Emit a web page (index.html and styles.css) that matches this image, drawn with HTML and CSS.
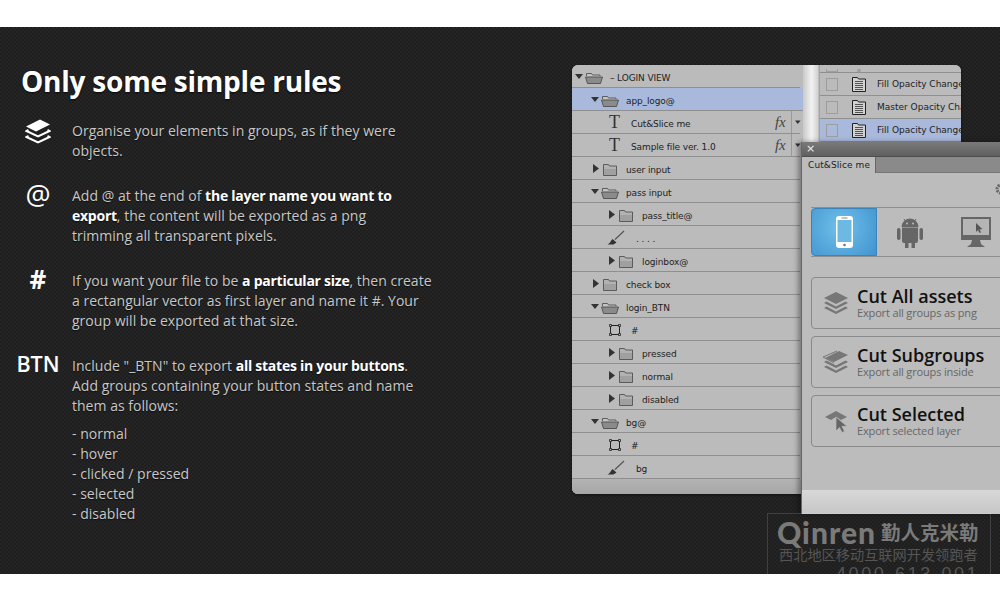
FILE: index.html
```html
<!DOCTYPE html>
<html lang="en">
<head>
<meta charset="utf-8">
<title>Only some simple rules</title>
<link rel="stylesheet" href="styles.css">
</head>
<body>
<svg class="defs" width="0" height="0" aria-hidden="true">
  <symbol id="arrow-down" viewBox="0 0 10 10"><path d="M0 2h8L4 7z"/></symbol>
  <symbol id="arrow-right" viewBox="0 0 10 10"><path d="M2 0v9l6-4.500z"/></symbol>
  <symbol id="folder-open" viewBox="0 0 18 12"><path d="M1.500 4V1.500h5l1 1.500h7.500v1" fill="#c4c4c4" stroke="#444" stroke-width=".8"/><path d="M.5 5h17l-2 6.500H2.500z" fill="#8b8b8b" stroke="#444" stroke-width=".8"/></symbol>
  <symbol id="folder-closed" viewBox="0 0 18 12"><path d="M2.500.5h5l1 1.500h7v9.500h-13z" fill="#b2b2b2" stroke="#444" stroke-width=".8"/><path d="M3 5h12v6H3z" fill="#a0a0a0"/></symbol>
  <symbol id="brush" viewBox="0 0 18 16"><path d="M17 1 8 9.500" stroke="#555" stroke-width="1.200" fill="none"/><path d="M5.500 9 9.500 12.500 6.500 14.500H0.500C3 13.500 3.500 11 5.500 9z" fill="#333"/></symbol>
  <symbol id="shape" viewBox="0 0 12 12"><path d="M1.500 1.500h9v9h-9z" fill="none" stroke="#222"/><path d="M.5.500h2v2h-2zM9.500.500h2v2h-2zM.5 9.500h2v2h-2zM9.500 9.500h2v2h-2z" fill="#bbb" stroke="#222" stroke-width=".8"/></symbol>
  <symbol id="doc" viewBox="0 0 14 15"><path d="M.5 14.500V.5h5l1 1.500h7v12.500z" fill="#d2d2d2" stroke="#222"/><path d="M3 4.500h8M3 6.500h8M3 8.500h8M3 10.500h8M3 12.500h8" stroke="#333" stroke-width=".8"/></symbol>
  <symbol id="stack" viewBox="0 0 26 24"><path d="M13 1 25 7 13 13 1 7z"/><path d="M3.500 10.500 1 12l12 6 12-6-2.500-1.500L13 15.500z"/><path d="M3.500 15.500 1 17l12 6 12-6-2.500-1.500L13 20.500z"/></symbol>
</svg>

<main class="stage">
  <section class="rules">
    <h1 class="title">Only some simple rules</h1>

    <div class="rule">
      <div class="mark">
        <svg class="mark-icon" viewBox="0 0 26 26"><path fill="#fff" d="M15 .5 25 5.500 11 12.500 1 7.500z"/><path fill="none" stroke="#fff" stroke-width="2" d="M3.500 11 1.500 12 13 17.500 24.500 12 22.500 11"/><path fill="none" stroke="#fff" stroke-width="2" d="M3.500 17 1.500 18 13 23.500 24.500 18 22.500 17"/></svg>
      </div>
      <div class="copy"><p>Organise your elements in groups, as if they were objects.</p></div>
    </div>

    <div class="rule">
      <div class="mark mark-text">@</div>
      <div class="copy"><p>Add @ at the end of <b>the layer name you want to export</b>, the content will be exported as a png<br>trimming all transparent pixels.</p></div>
    </div>

    <div class="rule">
      <div class="mark mark-text mark-hash">#</div>
      <div class="copy"><p>If you want your file to be <b>a particular size</b>, then create a rectangular vector as first layer and name it #. Your group will be exported at that size.</p></div>
    </div>

    <div class="rule">
      <div class="mark mark-text mark-btn">BTN</div>
      <div class="copy">
        <p>Include "_BTN" to export <b>all states in your buttons</b>. Add groups containing your button states and name them as follows:</p>
        <ul class="states">
          <li>- normal</li>
          <li>- hover</li>
          <li>- clicked / pressed</li>
          <li>- selected</li>
          <li>- disabled</li>
        </ul>
      </div>
    </div>
  </section>

  <div class="layers-window">
    <div class="layers">
      <div class="row d0"><svg class="arrow arrow-d"><use href="#arrow-down"/></svg><svg class="folder"><use href="#folder-open"/></svg><span>– LOGIN VIEW</span></div>
      <div class="row d1 selected"><svg class="arrow arrow-d"><use href="#arrow-down"/></svg><svg class="folder"><use href="#folder-open"/></svg><span>app_logo@</span></div>
      <div class="row d2"><span class="glyph-t">T</span><span>Cut&amp;Slice me</span><i class="fx">fx</i><span class="fx-menu"><svg class="arrow arrow-fx"><use href="#arrow-down"/></svg></span></div>
      <div class="row d2"><span class="glyph-t">T</span><span>Sample file ver. 1.0</span><i class="fx">fx</i><span class="fx-menu"><svg class="arrow arrow-fx"><use href="#arrow-down"/></svg></span></div>
      <div class="row d1"><svg class="arrow"><use href="#arrow-right"/></svg><svg class="folder"><use href="#folder-closed"/></svg><span>user input</span></div>
      <div class="row d1"><svg class="arrow arrow-d"><use href="#arrow-down"/></svg><svg class="folder"><use href="#folder-open"/></svg><span>pass input</span></div>
      <div class="row d15"><svg class="arrow"><use href="#arrow-right"/></svg><svg class="folder"><use href="#folder-closed"/></svg><span>pass_title@</span></div>
      <div class="row d2"><svg class="brush"><use href="#brush"/></svg><span>. . . .</span></div>
      <div class="row d15"><svg class="arrow"><use href="#arrow-right"/></svg><svg class="folder"><use href="#folder-closed"/></svg><span>loginbox@</span></div>
      <div class="row d1"><svg class="arrow"><use href="#arrow-right"/></svg><svg class="folder"><use href="#folder-closed"/></svg><span>check box</span></div>
      <div class="row d1"><svg class="arrow arrow-d"><use href="#arrow-down"/></svg><svg class="folder"><use href="#folder-open"/></svg><span>login_BTN</span></div>
      <div class="row d2"><svg class="shape"><use href="#shape"/></svg><span>#</span></div>
      <div class="row d15"><svg class="arrow"><use href="#arrow-right"/></svg><svg class="folder"><use href="#folder-closed"/></svg><span>pressed</span></div>
      <div class="row d15"><svg class="arrow"><use href="#arrow-right"/></svg><svg class="folder"><use href="#folder-closed"/></svg><span>normal</span></div>
      <div class="row d15"><svg class="arrow"><use href="#arrow-right"/></svg><svg class="folder"><use href="#folder-closed"/></svg><span>disabled</span></div>
      <div class="row d1"><svg class="arrow arrow-d"><use href="#arrow-down"/></svg><svg class="folder"><use href="#folder-open"/></svg><span>bg@</span></div>
      <div class="row d2"><svg class="shape"><use href="#shape"/></svg><span>#</span></div>
      <div class="row d2"><svg class="brush"><use href="#brush"/></svg><span>bg</span></div>
      <div class="layers-foot"></div>
    </div>
    <div class="gutter"></div>
    <div class="history">
      <div class="hrow hrow-cut"><span class="check"></span><svg class="doc"><use href="#doc"/></svg></div>
      <div class="hrow"><span class="check"></span><svg class="doc"><use href="#doc"/></svg><span>Fill Opacity Change</span></div>
      <div class="hrow"><span class="check"></span><svg class="doc"><use href="#doc"/></svg><span>Master Opacity Change</span></div>
      <div class="hrow selected"><span class="check"></span><svg class="doc"><use href="#doc"/></svg><span>Fill Opacity Change</span></div>
    </div>
  </div>

  <div class="plugin">
    <div class="plugin-title"><span class="close">×</span></div>
    <div class="plugin-tabs"><span class="plugin-tab">Cut&amp;Slice me</span></div>
    <div class="plugin-body">
      <svg class="gear" viewBox="0 0 12 12"><circle cx="6" cy="6" r="4" fill="none" stroke="#666" stroke-width="3" stroke-dasharray="2 1"/></svg>
      <div class="platforms">
        <div class="platform active">
          <svg width="17" height="32" viewBox="0 0 17 32"><rect width="17" height="32" rx="3" fill="#fff"/><rect x="1.500" y="4" width="14" height="22" fill="#6db9e4"/><rect x="5.500" y="1.500" width="6" height="1" fill="#888"/><circle cx="8.500" cy="29" r="1.300" fill="#777"/></svg>
        </div>
        <div class="platform">
          <svg width="26" height="32" viewBox="0 0 26 32" fill="#666"><path d="M5 11a8 8 0 0 1 16 0zM7 3 9 6M19 3 17 6" stroke="#666"/><circle cx="10" cy="7.500" r="1" fill="#bbb"/><circle cx="16" cy="7.500" r="1" fill="#bbb"/><path d="M5 12h16v13a2 2 0 0 1-2 2h-1v5h-3.500v-5h-3v5H8v-5H7a2 2 0 0 1-2-2z"/><rect y="12" width="3.500" height="12" rx="1.700"/><rect x="22.500" y="12" width="3.500" height="12" rx="1.700"/></svg>
        </div>
        <div class="platform">
          <svg width="30" height="31" viewBox="0 0 30 31"><path d="M1 1h28v20H1z" fill="#b5b5b5" stroke="#666" stroke-width="2"/><path d="M0 18h30v5H0z" fill="#666"/><path d="M11 23h8l1 4 4 3H6l4-3z" fill="#666"/><path d="M15 6v9l2-2 1.500 3 1.500-.7-1.500-3h3z" fill="#555"/></svg>
        </div>
      </div>
      <div class="action">
        <svg class="action-icon"><use href="#stack"/></svg>
        <div class="action-copy"><strong>Cut All assets</strong><small>Export all groups as png</small></div>
      </div>
      <div class="action">
        <svg class="action-icon" viewBox="0 0 26 24"><path fill="#777" d="M16 1 25 5 11 12 2 8z"/><path fill="none" stroke="#777" d="M0 7 14 1M0 7l11 6"/><path fill="#777" d="M3.500 10.500 1 12l12 6 12-6-2.500-1.500L13 15.500zM3.500 15.500 1 17l12 6 12-6-2.500-1.500L13 20.500z"/></svg>
        <div class="action-copy"><strong>Cut Subgroups</strong><small>Export all groups inside</small></div>
      </div>
      <div class="action">
        <svg class="action-icon" viewBox="0 0 26 24"><path fill="#777" d="M13 2 24 8 18 11 13 8 8 11 2 8z"/><path fill="#666" stroke="#bbb" stroke-width=".7" d="M13 8V22l3.500-3.500 2.500 5 2.500-1.200-2.500-5h5z"/></svg>
        <div class="action-copy"><strong>Cut Selected</strong><small>Export selected layer</small></div>
      </div>
    </div>
    <div class="plugin-foot"></div>
  </div>

  <div class="watermark">
    <div class="wm-logo"><span class="wm-latin">Qinren</span><span class="wm-cjk">勤人克米勒</span></div>
    <div class="wm-slogan">西北地区移动互联网开发领跑者</div>
    <div class="wm-phone">4000-613-001</div>
  </div>
</main>
</body>
</html>
```
FILE: styles.css
```css
* { box-sizing: border-box; }
html, body { margin: 0; padding: 0; }
body { background: #fff; padding: 27px 0 26px; font-family: "Open Sans", sans-serif; overflow: hidden; height: 600px; }
.defs { position: absolute; }

.stage {
  position: relative;
  height: 547px;
  overflow: hidden;
  background-color: #252525;
  background-image:
    linear-gradient(45deg, #1e1e1e 25%, transparent 25%, transparent 75%, #1e1e1e 75%),
    linear-gradient(45deg, #1e1e1e 25%, transparent 25%, transparent 75%, #1e1e1e 75%);
  background-size: 4px 4px;
  background-position: 0 0, 2px 2px;
}

/* Left column */
.rules { width: 440px; padding: 30px 0 0 17px; color: #c8c8c8; }
.title { margin: 0 0 16px 4px; font-size: 28px; line-height: 48px; height: 48px; font-weight: 700; color: #fff; letter-spacing: -.22px; text-shadow: 0 1px 2px rgba(0,0,0,.8); }
.rule { display: flex; margin-bottom: 25px; }
.mark { flex: 0 0 42px; min-width: 0; margin-right: 13px; display: flex; justify-content: center; color: #fff; white-space: nowrap; }
.mark-icon { width: 26px; height: 26px; margin-top: -2px; }
.mark-text { font-size: 28px; line-height: 28px; height: 28px; margin-top: -6px; }
.mark-hash { font-weight: 700; font-size: 26px; line-height: 30px; margin-top: -7px; }
.mark-btn { font-size: 21.500px; line-height: 20px; font-weight: 600; margin-top: -2px; }
.copy { flex: 0 0 368px; font-size: 14px; line-height: 20px; letter-spacing: .02px; text-shadow: 0 1px 1px rgba(0,0,0,.6); }
.copy p { margin: 0; width: 362px; }
.copy b { color: #fff; font-weight: 700; letter-spacing: -.25px; }
.states { list-style: none; margin: 8px 0 0; padding: 0; }

/* Layers window */
.layers-window {
  position: absolute; left: 572px; top: 38px; width: 389px; height: 429px;
  display: flex; background: #bbb; border-radius: 6px; overflow: hidden;
  font-family: "DejaVu Sans", sans-serif; font-size: 9px; color: #222;
  box-shadow: 0 1px 3px rgba(0,0,0,.5);
}
.layers { flex: 0 0 231px; display: flex; flex-direction: column; background: #bbb; letter-spacing: -.12px; }
.row { flex: 0 0 23px; display: flex; align-items: center; padding-top: 3px; position: relative; white-space: nowrap; background: linear-gradient(#8f8f8f,#8f8f8f) left bottom / 228px 1px no-repeat; }
.row.selected { background: #a9b9db; box-shadow: inset 0 -1px 0 #8f8f8f; }
.d0 { padding-left: 3px; }
.d1 { padding-left: 19px; }
.d15 { padding-left: 35px; }
.d2 { padding-left: 37px; }
.arrow { width: 10px; height: 10px; fill: #333; flex: none; margin-top: -3px; }
.arrow-d { fill: #333; }
.folder { width: 18px; height: 12px; flex: none; margin-right: 7px; }
.glyph-t { width: 22px; font-family: "Liberation Serif", serif; font-size: 18px; font-weight: 400; line-height: 14px; margin-top: -5px; color: #333; }
.brush { width: 18px; height: 16px; margin-left: -2px; margin-right: 11px; flex: none; margin-top: -3px; }
.shape { width: 12px; height: 12px; margin-right: 10px; flex: none; margin-top: -2px; }
.fx { position: absolute; left: 203px; top: 2px; font-family: "Liberation Serif", serif; font-size: 15px; line-height: 19px; color: #444; }
.fx-menu { position: absolute; left: 219px; top: 0; bottom: 1px; width: 12px; padding-left: 3px; border-left: 1px solid #999; display: flex; align-items: center; }
.arrow-fx { width: 7px; height: 7px; margin-top: 0; }
.layers-foot { flex: 1; background: linear-gradient(#b3b3b3, #a6a6a6); }
.gutter { flex: 0 0 17px; background: linear-gradient(90deg, #c9c9c9, #f2f2f2 50%, #d5d5d5 85%, #9a9a9a); }
.history { flex: 1; overflow: hidden; background: #bbb; }
.hrow { height: 23px; display: flex; align-items: center; border-bottom: 1px solid #8f8f8f; padding-left: 6px; white-space: nowrap; font-size: 9px; color: #222; }
.hrow-cut { height: 8px; align-items: flex-end; overflow: hidden; }
.hrow.selected { background: #a9b9db; }
.check { width: 12px; height: 13px; border: 1px solid #9d9d9d; flex: none; margin-right: 14px; }
.hrow-cut .check { border-top: 0; height: 3px; }
.doc { width: 14px; height: 15px; flex: none; margin-right: 11px; }
.hrow-cut .doc { height: 3px; }

/* Cut & Slice panel */
.plugin {
  position: absolute; left: 801px; top: 115px; width: 215px; height: 372px;
  display: flex; flex-direction: column; background: #bcbcbc;
  font-family: "DejaVu Sans", sans-serif;
  box-shadow: -3px 0 5px rgba(0,0,0,.35);
  border-left: 1px solid #666;
}
.plugin-title { height: 14px; background: linear-gradient(#7a7a7a, #5f5f5f); color: #ddd; font-size: 11px; line-height: 13px; padding-left: 4px; flex: none; }
.close { color: #eee; }
.plugin-tabs { height: 17px; flex: none; background: #8a8a8a; border-top: 1px solid #4e4e4e; border-bottom: 1px solid #777; display: flex; }
.plugin-tab { width: 74px; height: 16px; background: #bcbcbc; border-right: 1px solid #666; font-size: 9px; line-height: 16px; padding-left: 6px; color: #222; letter-spacing: .1px; }
.plugin-body { flex: 1; padding: 34px 0 0 9px; position: relative; }
.gear { position: absolute; left: 193px; top: 10px; width: 12px; height: 12px; }
.platforms { display: flex; height: 50px; width: 215px; border-top: 1px solid #8f8f8f; border-bottom: 1px solid #8f8f8f; margin-bottom: 20px; }
.platform { flex: 0 0 66px; display: flex; align-items: center; justify-content: center; }
.platform.active { background: radial-gradient(circle at 45% 40%, #72c1ea, #3f93cf); border-radius: 4px 0 0 4px; border: 1px solid #3b83b8; }
.action { width: 210px; height: 52px; margin-bottom: 7px; display: flex; align-items: center; border: 1px solid #8a8a8a; border-radius: 4px; padding-left: 11px; }
.action:nth-of-type(3) { margin-top: 1px; }
.action-icon { width: 26px; height: 24px; flex: none; margin-right: 8px; fill: #777; }
.action-copy { display: flex; flex-direction: column; }
.action-copy strong { font-family: "Open Sans", sans-serif; font-size: 18px; line-height: 19px; font-weight: 600; color: #111; white-space: nowrap; }
.action-copy small { font-family: "Open Sans", sans-serif; font-size: 11px; line-height: 13px; color: #666; white-space: nowrap; letter-spacing: -.15px; }
.plugin-foot { height: 24px; flex: none; background: linear-gradient(#d8d8d8, #c6c6c6); }

/* Watermark */
.watermark {
  position: absolute; left: 767px; top: 486px; width: 224px; height: 70px;
  border: 1px solid rgba(255,255,255,.14);
  padding: 5px 0 0 9px; color: #555;
  font-family: "Noto Sans CJK SC", sans-serif; white-space: nowrap;
}
.wm-logo { display: flex; align-items: center; height: 26px; color: #7a7a7a; }
.wm-latin { font-family: "Lato", sans-serif; font-weight: 900; font-size: 30px; line-height: 26px; letter-spacing: 1px; }
.wm-cjk { font-size: 19.500px; line-height: 26px; margin-left: 5px; font-weight: 700; }
.wm-slogan { font-size: 14.200px; line-height: 17px; margin-top: 1px; margin-left: 2px; }
.wm-phone { font-family: "Liberation Sans", sans-serif; font-size: 18px; line-height: 20px; margin-top: 1px; margin-left: 59px; letter-spacing: 2.600px; }
```
